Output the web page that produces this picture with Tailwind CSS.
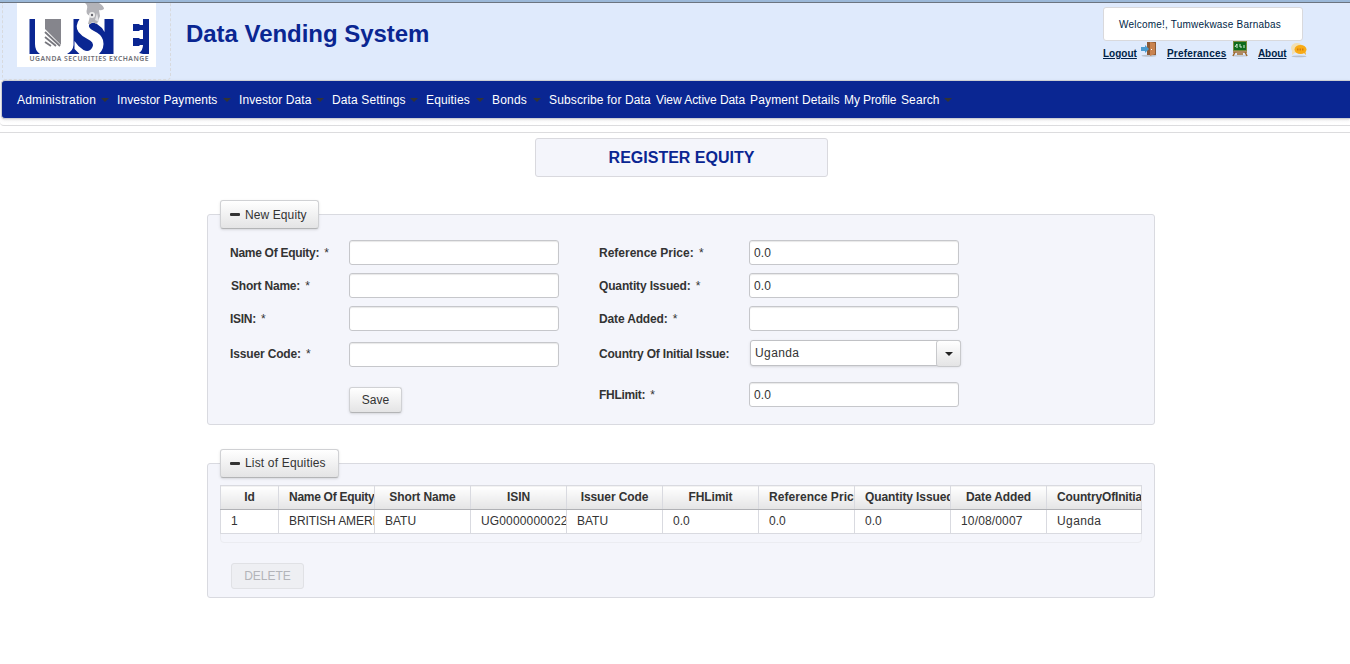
<!DOCTYPE html>
<html lang="en">
<head>
<meta charset="utf-8">
<title>Data Vending System</title>
<script src="https://cdn.jsdelivr.net/npm/@tailwindcss/browser@4"></script>
</head>
<body class="w-[1350px] h-[664px] overflow-hidden bg-white font-['Liberation_Sans',Arial,sans-serif] text-xs text-[#333]">

<header class="flex h-20 items-start border-t-2 border-[#9bb8d8] bg-[#dfeafc]">
  <div class="flex h-[78px] w-full border-t border-[#6b7480]">
    <div class="ml-0.5 h-[77px] w-[169px] shrink-0 rounded-b border-x border-b border-dashed border-[#d8dade] pl-3.5">
      <svg class="block" width="139" height="64" viewBox="17 3 139 64">
        <rect x="17" y="3" width="139" height="64" fill="#fff"/>
        <g fill="#0a2692">
          <path d="M29.5 19h5.5v25q0 7 5 10H29.5z"/>
          <path d="M143 19h6v35h-6l-4-1q4-3 4-8h-3l-1 1h-6v-8h6l1 1h3v-9h-3l-1 1h-6v-7h6l1 1h3z"/>
          <path d="M73.500 19h6q-5 7-1 13q3 4 9 7q7 3 5 8q-3 6-9 3q-6-4-9-9v8l5 5H67q6-3 6.500-9z"/>
          <path d="M104.500 19h9v35H99q6-6 4-14q-2-6-9-9q-6-3-5-6q2-4 8-1q5 3 7.500 8z"/>
        </g>
        <path d="M45 19h16v26L45 29z" fill="#85858c"/>
        <path d="M45 32l15 14M45 37l11 9M45 42l6 4" stroke="#77777e" stroke-width="1.800" fill="none"/>
        <path d="M85 3h14q5 3 5 6q-3 2-5 1l1 6-3 8-5-2-1 2h-3l2-8q-5-2-3-7q1-4-2-6z" fill="#b3b3b8"/>
        <circle cx="92" cy="15" r="3" fill="#eee"/><circle cx="92" cy="15" r="1.2" fill="#66666e"/>
        <path d="M97 13l2 9-4-2z" fill="#e2e2e5"/>
        <text x="29.5" y="60.5" textLength="119" lengthAdjust="spacing" font-family="Noto Sans, sans-serif" font-weight="600" font-size="6.8" fill="#6f6f76">UGANDA SECURITIES EXCHANGE</text>
      </svg>
    </div>
    <h1 class="ml-[15px] mt-4 text-2xl leading-[30px] font-bold text-[#0a2692] tracking-[-0.04px]">Data Vending System</h1>
    <div class="ml-auto mr-[42px] mt-1 w-[205px] text-[10px] text-[#001f47]">
      <div class="flex h-[34px] w-[200px] items-center rounded-[3px] border border-[#d9d9dc] bg-white pt-0.5 pl-[15px] tracking-[0.21px]">Welcome!, Tumwekwase Barnabas</div>
      <div class="flex h-[17px] font-bold">
        <a class="mt-[7px] w-[33px] whitespace-nowrap leading-3 underline">Logout</a>
        <svg class="ml-[5px]" width="16" height="16" viewBox="0 0 16 16"><ellipse cx="8" cy="14.8" rx="7.5" ry="1" fill="#b9c1cc"/><path d="M6 1h9v13H6z" fill="#8c5a35"/><path d="M9 1l5 1v11l-5 2z" fill="#c98350"/><path d="M0 6h4V4l4 4-4 4v-2H0z" fill="#4a9bd0"/><path d="M10 8h1v1h-1z" fill="#fff"/></svg>
        <a class="ml-2.5 mt-[7px] w-[60px] whitespace-nowrap leading-3 tracking-[0.2px] underline">Preferances</a>
        <svg class="ml-[5px]" width="16" height="16" viewBox="0 0 16 16"><ellipse cx="8" cy="14.8" rx="7.5" ry="1" fill="#c5ccd5"/><path d="M3 11l-2 4M13 11l2 4M1 11h14M5 13h6" stroke="#a06a2c" stroke-width="1.5" fill="none"/><path d="M1 0h14v10H1z" fill="#7c8b3d"/><path d="M2 1h12v8H2z" fill="#0d6b1c"/><path d="M3 6l2-3v4M8 3v3h2M12 4v3" stroke="#d8edd8" fill="none"/></svg>
        <a class="ml-2.5 mt-[7px] w-7 whitespace-nowrap leading-3 tracking-[-0.1px] underline">About</a>
        <svg class="ml-[5px] mt-px" width="16" height="16" viewBox="0 0 16 16"><ellipse cx="8" cy="14.4" rx="7.5" ry=".9" fill="#b9c1cc"/><ellipse cx="6" cy="6" rx="6" ry="5" fill="#f1dfb3"/><path d="M1 9v4l4-3z" fill="#f1dfb3"/><ellipse cx="9.5" cy="7.5" rx="6" ry="4.5" fill="#f8ab16"/><path d="M12 10l3 3-1-5z" fill="#f8ab16"/><path d="M6 7.5h7" stroke="#d77c0a" stroke-width="2" stroke-dasharray="1.5 1"/></svg>
      </div>
    </div>
  </div>
</header>

<div class="h-[46px] rounded-bl border-b border-[#dcdcde] bg-linear-to-b from-[#f8f6f8] to-white pl-px">
  <nav class="flex h-[39px] items-center rounded-l border border-r-0 border-[#ccced4] bg-[#0a2692] pl-[15px] text-white shadow-sm">
    <span class="w-[100px] flex items-center justify-between pr-4 whitespace-nowrap tracking-[0.22px]">Administration<i class="-mr-2 border-x-4 border-t-4 border-x-transparent border-t-[#333]"></i></span>
    <span class="w-[122px] flex items-center justify-between pr-4 whitespace-nowrap tracking-[0.06px]">Investor Payments<i class="-mr-2 border-x-4 border-t-4 border-x-transparent border-t-[#333]"></i></span>
    <span class="w-[93px] flex items-center justify-between pr-4 whitespace-nowrap tracking-[0.08px]">Investor Data<i class="-mr-2 border-x-4 border-t-4 border-x-transparent border-t-[#333]"></i></span>
    <span class="w-[94px] flex items-center justify-between pr-4 whitespace-nowrap tracking-[0.12px]">Data Settings<i class="-mr-2 border-x-4 border-t-4 border-x-transparent border-t-[#333]"></i></span>
    <span class="w-[66px] flex items-center justify-between pr-4 whitespace-nowrap tracking-[0.15px]">Equities<i class="-mr-2 border-x-4 border-t-4 border-x-transparent border-t-[#333]"></i></span>
    <span class="w-[57px] flex items-center justify-between pr-4 whitespace-nowrap tracking-[0.2px]">Bonds<i class="-mr-2 border-x-4 border-t-4 border-x-transparent border-t-[#333]"></i></span>
    <span class="w-[107px] whitespace-nowrap tracking-[0.14px]">Subscribe for Data</span>
    <span class="w-[94px] whitespace-nowrap tracking-[-0.05px]">View Active Data</span>
    <span class="w-[94px] whitespace-nowrap tracking-[0.15px]">Payment Details</span>
    <span class="w-[57px] whitespace-nowrap tracking-[-0.1px]">My Profile</span>
    <span class="w-[56px] flex items-center justify-between pr-[13px] whitespace-nowrap tracking-[0.1px]">Search<i class="-mr-2 border-x-4 border-t-4 border-x-transparent border-t-[#333]"></i></span>
  </nav>
</div>

<main class="mt-1.5 border-t border-[#dcdcde] pt-[5px]">
  <h2 class="ml-[535px] flex h-[39px] w-[293px] items-center justify-center rounded-[3px] border border-[#d9d9de] bg-[#f4f5fb] text-base font-bold text-[#0a2692]">REGISTER EQUITY</h2>

  <section class="ml-[207px] mt-[37px] h-[211px] w-[948px] rounded-[3px] border border-[#d9dae0] bg-[#f4f5fb]">
    <div class="-mt-[15px] ml-3 flex h-[29px] w-[99px] items-center rounded-[3px] border border-[#d0d1d4] border-b-[#b3b4b6] bg-linear-to-b from-white to-[#e4e4e5] pl-[9px] shadow-sm tracking-[0.1px]"><i class="mr-[5px] h-[3px] w-2.5 rounded-[1px] bg-[#333]"></i>New Equity</div>
    <div class="ml-[22px] mt-[11px] flex">
      <div class="grid w-[369px] grid-cols-[119px_210px] grid-rows-[25px_25px_25px_25px_25px] items-center">
        <b class="tracking-[-0.28px] whitespace-nowrap">Name Of Equity: <span class="ml-[2px] font-normal">*</span></b><div class="h-[25px] rounded-[3px] border border-[#c6c7cb] bg-white shadow-[inset_0_1px_1px_#e8e8e8]"></div>
        <b class="mt-4 pl-px tracking-[-0.2px] whitespace-nowrap">Short Name: <span class="ml-[2px] font-normal">*</span></b><div class="mt-4 h-[25px] rounded-[3px] border border-[#c6c7cb] bg-white shadow-[inset_0_1px_1px_#e8e8e8]"></div>
        <b class="mt-8 tracking-[-0.3px] whitespace-nowrap">ISIN: <span class="ml-[2px] font-normal">*</span></b><div class="mt-8 h-[25px] rounded-[3px] border border-[#c6c7cb] bg-white shadow-[inset_0_1px_1px_#e8e8e8]"></div>
        <b class="mt-[52px] tracking-[-0.15px] whitespace-nowrap">Issuer Code: <span class="ml-[2px] font-normal">*</span></b><div class="mt-[54px] h-[25px] rounded-[3px] border border-[#c6c7cb] bg-white shadow-[inset_0_1px_1px_#e8e8e8]"></div>
        <span></span><button class="mt-[94px] h-[26px] w-[53px] rounded-[3px] border border-[#d0d1d4] border-b-[#b3b4b6] bg-linear-to-b from-white to-[#e4e4e5] shadow-sm">Save</button>
      </div>
      <div class="grid w-[362px] grid-cols-[150px_212px] grid-rows-[25px_25px_25px_28px_25px] content-start items-center [&>div]:pl-1">
        <b class="tracking-[0px] whitespace-nowrap">Reference Price: <span class="ml-[2px] font-normal">*</span></b><div class="flex h-[25px] w-[210px] items-center rounded-[3px] border border-[#c6c7cb] bg-white tracking-[0.15px] shadow-[inset_0_1px_1px_#e8e8e8]">0.0</div>
        <b class="mt-4 tracking-[-0.15px] whitespace-nowrap">Quantity Issued: <span class="ml-[2px] font-normal">*</span></b><div class="mt-4 flex h-[25px] w-[210px] items-center rounded-[3px] border border-[#c6c7cb] bg-white tracking-[0.15px] shadow-[inset_0_1px_1px_#e8e8e8]">0.0</div>
        <b class="mt-8 tracking-[-0.15px] whitespace-nowrap">Date Added: <span class="ml-[2px] font-normal">*</span></b><div class="mt-8 flex h-[25px] w-[210px] items-center rounded-[3px] border border-[#c6c7cb] bg-white shadow-[inset_0_1px_1px_#e8e8e8]"></div>
        <b class="mt-[49px] tracking-[-0.2px] whitespace-nowrap">Country Of Initial Issue:</b><div class="mt-12 ml-px flex h-[26px] w-[211px] items-center rounded-[3px] border border-[#c0c1c5] bg-white shadow-sm"><span class="grow tracking-[0.4px]">Uganda</span><span class="-mr-px -mb-px flex h-[27px] w-[25px] items-center justify-center rounded-[3px] border border-[#c8c9cc] bg-linear-to-b from-white to-[#e4e4e5]"><i class="border-x-4 border-t-4 border-x-transparent border-t-[#222]"></i></span></div>
        <b class="mt-[78px] tracking-[-0.3px] whitespace-nowrap">FHLimit: <span class="ml-[2px] font-normal">*</span></b><div class="mt-[78px] flex h-[25px] w-[210px] items-center rounded-[3px] border border-[#c6c7cb] bg-white tracking-[0.15px] shadow-[inset_0_1px_1px_#e8e8e8]">0.0</div>
      </div>
    </div>
  </section>

  <section class="ml-[207px] mt-[38px] h-[135px] w-[948px] rounded-[3px] border border-[#d9dae0] bg-[#f4f5fb]">
    <div class="-mt-[15px] ml-3 flex h-[29px] w-[119px] items-center rounded-[3px] border border-[#d0d1d4] border-b-[#b3b4b6] bg-linear-to-b from-white to-[#e4e4e5] pb-px pl-[9px] shadow-sm tracking-[0.17px]"><i class="mr-[5px] h-[3px] w-2.5 rounded-[1px] bg-[#333]"></i>List of Equities</div>
    <div class="ml-3 mt-[7px] h-[58px] w-[922px] rounded-b border border-[#ebecf1]">
      <table class="-ml-px -mt-px w-[922px] table-fixed border-collapse [&_td]:overflow-hidden [&_td]:border [&_td]:border-[#d9dae0] [&_td]:bg-white [&_td]:pb-0.5 [&_td]:pl-2.5 [&_td]:whitespace-nowrap [&_th]:overflow-hidden [&_th]:border [&_th]:border-[#d9dae0] [&_th]:border-b-[#b0b1b5] [&_th]:bg-linear-to-b [&_th]:from-white [&_th]:to-[#e4e4e5] [&_th]:px-2.5 [&_th]:pb-0.5 [&_th]:whitespace-nowrap [&_th]:tracking-[-0.1px]">
        <colgroup><col class="w-[58px]"><col class="w-24"><col class="w-24"><col class="w-24"><col class="w-24"><col class="w-24"><col class="w-24"><col class="w-24"><col class="w-24"><col class="w-[95px]"></colgroup>
        <tr class="h-6"><th>Id</th><th><span class="tracking-[-0.28px]">Name Of Equity</span></th><th>Short Name</th><th>ISIN</th><th>Issuer Code</th><th>FHLimit</th><th><span class="tracking-[0.05px]">Reference Price</span></th><th>Quantity Issued</th><th>Date Added</th><th><span class="tracking-[-0.15px]">CountryOfInitialIssue</span></th></tr>
        <tr class="h-6"><td>1</td><td><span class="tracking-[-0.1px]">BRITISH AMERICAN</span></td><td>BATU</td><td><span class="tracking-[0.15px]">UG0000000022</span></td><td>BATU</td><td>0.0</td><td>0.0</td><td>0.0</td><td><span class="tracking-[0.15px]">10/08/0007</span></td><td><span class="tracking-[0.4px]">Uganda</span></td></tr>
      </table>
    </div>
    <button class="ml-[23px] mt-5 h-[26px] w-[73px] rounded-[3px] border border-[#e0e1e5] bg-[#eeeff3] text-[#b3b4b9]">DELETE</button>
  </section>
</main>
</body>
</html>
